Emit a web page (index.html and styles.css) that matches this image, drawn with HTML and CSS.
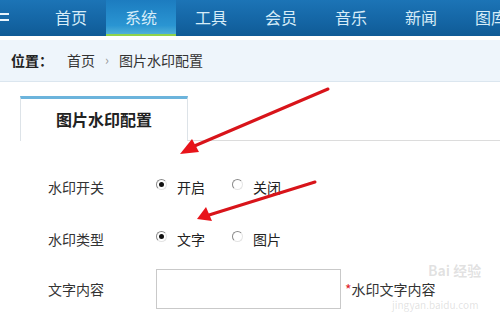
FILE: index.html
```html
<!DOCTYPE html>
<html lang="zh">
<head>
<meta charset="utf-8">
<link rel="stylesheet" href="styles.css">
</head>
<body>
<div class="page">
  <nav class="nav">
    <div class="menu-icon"><span></span><span></span></div>
    <a class="nav-item">首页</a>
    <a class="nav-item active">系统</a>
    <a class="nav-item">工具</a>
    <a class="nav-item">会员</a>
    <a class="nav-item">音乐</a>
    <a class="nav-item">新闻</a>
    <a class="nav-item">图库</a>
  </nav>
  <div class="crumb">
    <b>位置：</b><span class="c-link">首页</span><span class="sep">›</span><span>图片水印配置</span>
  </div>
  <div class="tabs">
    <div class="tab">图片水印配置</div>
    <div class="tab-rest"></div>
  </div>
  <div class="form">
    <div class="row">
      <div class="label">水印开关</div>
      <div class="opts">
        <span class="radio checked"></span><span class="opt">开启</span>
        <span class="radio"></span><span class="opt">关闭</span>
      </div>
    </div>
    <div class="row">
      <div class="label">水印类型</div>
      <div class="opts">
        <span class="radio checked"></span><span class="opt">文字</span>
        <span class="radio"></span><span class="opt">图片</span>
      </div>
    </div>
    <div class="row row-input">
      <div class="label">文字内容</div>
      <div class="input"></div>
      <div class="hint"><span class="star">*</span>水印文字内容</div>
    </div>
  </div>
  <div class="wm wm1">Bai 经验</div>
  <div class="wm wm2">jingyan.baidu.com</div>
  <svg class="arrows" width="500" height="319" viewBox="0 0 500 319">
    <line x1="328" y1="89" x2="192" y2="147" stroke="#d8141a" stroke-width="3" stroke-linecap="round"/>
    <polygon points="180,154 192,139 199,152" fill="#e8141a"/>
    <line x1="315" y1="182" x2="209" y2="215" stroke="#d8141a" stroke-width="3" stroke-linecap="round"/>
    <polygon points="197,219 206,207 212,221" fill="#e8141a"/>
  </svg>
</div>
</body>
</html>
```
FILE: styles.css
```css
* { box-sizing: border-box; }
html, body { margin: 0; padding: 0; background: #fff; }
body {
  font-family: "Noto Sans CJK SC", "Microsoft YaHei", sans-serif;
  color: #333;
  width: 500px;
  height: 319px;
  overflow: hidden;
}
.page { position: relative; width: 500px; height: 319px; }
.nav {
  height: 36px;
  display: flex;
  background: linear-gradient(#1c74b6, #1465a4 60%, #0f5b96);
  white-space: nowrap;
  overflow: hidden;
}
.menu-icon {
  width: 36px;
  flex: none;
  display: flex;
  flex-direction: column;
  gap: 4px;
  padding-top: 13px;
}
.menu-icon span { display: block; width: 9px; height: 2px; background: #e8f4fc; }
.nav-item {
  width: 70px;
  flex: none;
  text-align: center;
  font-size: 16px;
  line-height: 34px;
  color: #d6ecf8;
}
.nav-item.active {
  background: linear-gradient(#1c7cc0, #2a95d2 75%, #4fb0d8);
  border-bottom: 2px solid #8fd24a;
}
.crumb {
  margin-top: 4px;
  height: 42px;
  background: #eef5fb;
  border-bottom: 1px solid #dbe6ef;
  display: flex;
  align-items: center;
  padding-left: 11px;
  padding-bottom: 2px;
  font-size: 14px;
  color: #333;
}
.crumb b { color: #222; margin-right: 14px; }
.sep { color: #999; margin: 0 10px 0 10px; font-size: 13px; }
.tabs {
  display: flex;
  margin-top: 14px;
  padding-left: 20px;
  height: 45px;
}
.tab {
  width: 168px;
  border-top: 3px solid #6cb4dc;
  border-left: 1px solid #dde3e8;
  border-right: 1px solid #dde3e8;
  background: #fff;
  text-align: center;
  font-size: 16px;
  font-weight: bold;
  color: #222;
  line-height: 40px;
}
.tab-rest { flex: 1; border-bottom: 1px solid #dcdcdc; }
.form { padding-top: 20px; }
.row {
  display: flex;
  align-items: center;
  height: 52px;
  padding-left: 48px;
  font-size: 14px;
}
.label { width: 108px; color: #333; }
.opts { display: flex; align-items: center; }
.radio {
  width: 11px;
  height: 11px;
  border-radius: 50%;
  border: 1px solid;
  border-color: #8a8a8a #e4e4e4 #e4e4e4 #8a8a8a;
  position: relative;
  margin-right: 10px;
  margin-top: -5px;
}
.radio.checked::after {
  content: "";
  position: absolute;
  left: 2px; top: 2px;
  width: 5px; height: 5px;
  border-radius: 50%;
  background: #111;
}
.opt { margin-right: 27px; color: #222; }
.row-input { height: 48px; }
.input {
  width: 185px;
  height: 40px;
  border: 1px solid #c9c9c9;
  background: #fff;
}
.hint { margin-left: 4px; color: #333; }
.star { color: #e0222a; }
.wm {
  position: absolute;
  color: rgba(150,150,150,0.28);
  white-space: nowrap;
}
.wm1 { left: 428px; top: 262px; font-size: 14px; font-weight: bold; line-height: 16px; }
.wm2 { left: 392px; top: 299px; font-size: 10px; line-height: 12px; }
.arrows { position: absolute; left: 0; top: 0; pointer-events: none; }
```
